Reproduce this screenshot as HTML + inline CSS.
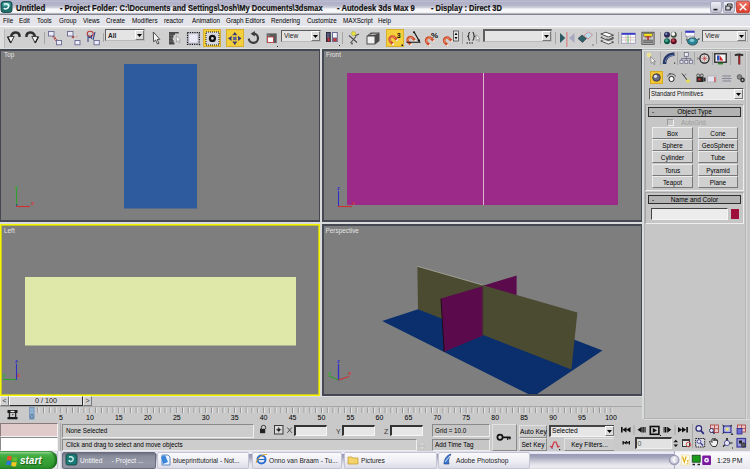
<!DOCTYPE html>
<html><head><meta charset="utf-8">
<style>
*{margin:0;padding:0;box-sizing:border-box}
html,body{width:750px;height:469px;overflow:hidden;background:#c9c9c9;font-family:"Liberation Sans",sans-serif;position:relative}
.a{position:absolute}
.t{position:absolute;white-space:pre;line-height:1;color:#000}
.vp{position:absolute;background:#7e7e7e;border:1px solid #454852}
.lbl{position:absolute;font-size:6.4px;color:#e4e4e4;white-space:pre;line-height:1}
.btn{position:absolute;background:#d0d0d0;border:1px solid;border-color:#ececec #787878 #787878 #ececec;font-size:6.4px;text-align:center;white-space:pre;line-height:9px;color:#000}
.fld{position:absolute;background:#e6e6e6;border:1px solid;border-color:#5a5a5a #f0f0f0 #f0f0f0 #5a5a5a}
.sep{position:absolute;width:2px;border-left:1px solid #9a9a9a;border-right:1px solid #f0f0f0}
.tb{position:absolute;background:linear-gradient(#fafafc,#eeeef4 8px,#dcdce8);border-radius:2px;border:1px solid #c4c4d4}
</style></head><body>

<!-- TITLE BAR -->
<div class="a" style="left:0;top:0;width:750px;height:15px;background:linear-gradient(#a0a0b4 0px,#c8c8e0 1px,#b0b0c8 2px,#b4b4c8 5px,#d0d0dc 7.5px,#f4f4f8 9px,#fafafc 11px,#eeeef2 13px,#7c7c8c 14px,#8a8a98 15px)"></div>
<div id="title">
<svg class="a" style="left:0;top:0" width="14" height="14">
 <rect x="1" y="1.5" width="11" height="11" rx="2.5" fill="#1f6e6c" stroke="#0d3a3a" stroke-width="0.8"/>
 <rect x="2.5" y="2.5" width="8" height="4" rx="1.5" fill="#4aa8a2"/>
 <path d="M4 4.5 C6.5 3 9.5 4.5 8.5 7 C7.8 9 5 9.5 3.8 8" fill="none" stroke="#e8f8f6" stroke-width="1.5"/>
</svg>
<div class="t" style="left:16px;top:4.2px;font-size:8.6px;font-weight:bold;color:#101010;-webkit-text-stroke:0.2px #101010;transform:scaleX(0.916);transform-origin:0 0">Untitled</div>
<div class="t" style="left:60px;top:4.2px;font-size:8.6px;font-weight:bold;color:#101010;-webkit-text-stroke:0.2px #101010;transform:scaleX(0.873);transform-origin:0 0">- Project Folder: C:\Documents and Settings\Josh\My Documents\3dsmax</div>
<div class="t" style="left:337px;top:4.2px;font-size:8.6px;font-weight:bold;color:#101010;-webkit-text-stroke:0.2px #101010;transform:scaleX(0.889);transform-origin:0 0">- Autodesk 3ds Max 9</div>
<div class="t" style="left:431px;top:4.2px;font-size:8.6px;font-weight:bold;color:#101010;-webkit-text-stroke:0.2px #101010;transform:scaleX(0.874);transform-origin:0 0">- Display : Direct 3D</div>
</div>

<!-- MENU BAR -->
<div class="a" style="left:0;top:15px;width:750px;height:12px;background:#e4e4eb"></div>
<div class="a" style="left:0;top:26px;width:750px;height:1px;background:#fafafa"></div>
<div id="menu" style="font-size:6.3px">
<div class="t" style="left:3px;top:18px;font-size:6.3px">File</div>
<div class="t" style="left:19px;top:18px;font-size:6.3px">Edit</div>
<div class="t" style="left:37px;top:18px;font-size:6.3px">Tools</div>
<div class="t" style="left:59px;top:18px;font-size:6.3px">Group</div>
<div class="t" style="left:83px;top:18px;font-size:6.3px">Views</div>
<div class="t" style="left:106px;top:18px;font-size:6.3px">Create</div>
<div class="t" style="left:132px;top:18px;font-size:6.3px">Modifiers</div>
<div class="t" style="left:164px;top:18px;font-size:6.3px">reactor</div>
<div class="t" style="left:192px;top:18px;font-size:6.3px">Animation</div>
<div class="t" style="left:226px;top:18px;font-size:6.3px">Graph Editors</div>
<div class="t" style="left:271px;top:18px;font-size:6.3px">Rendering</div>
<div class="t" style="left:307px;top:18px;font-size:6.3px">Customize</div>
<div class="t" style="left:343px;top:18px;font-size:6.3px">MAXScript</div>
<div class="t" style="left:378px;top:18px;font-size:6.3px">Help</div>
</div>

<!-- TOOLBAR -->
<div class="a" style="left:0;top:27px;width:750px;height:22px;background:#d0d0d0"></div>
<div class="a" style="left:0;top:27px;width:750px;height:2px;background:#dedede"></div>
<div class="a" style="left:0;top:27px;width:4px;height:22px;background:#dedede"></div>
<div class="a" style="left:4px;top:29px;width:1px;height:19px;background:#b8b8b8"></div>
<div class="a" style="left:0;top:48px;width:750px;height:1px;background:#dce2e0"></div>


<!-- TOOLBAR ICONS -->
<div class="a" style="left:203px;top:29px;width:18px;height:18px;background:#f4cf3c;border:1px solid #d8b030"></div>
<div class="a" style="left:226px;top:29px;width:18px;height:18px;background:#f4cf3c;border:1px solid #d8b030"></div>
<div class="a" style="left:386px;top:29px;width:18px;height:18px;background:#f4cf3c;border:1px solid #d8b030"></div>
<svg class="a" style="left:0;top:27px" width="750" height="22" viewBox="0 27 750 22">
 <g fill="#a4a4a4">
  <rect x="44" y="32" width="1" height="12"/><rect x="103" y="33" width="1" height="9"/><rect x="342" y="32" width="1" height="12"/>
  <rect x="462" y="32" width="1" height="12"/><rect x="555" y="32" width="1" height="12"/><rect x="596" y="32" width="1" height="12"/>
  <rect x="618" y="32" width="1" height="12"/><rect x="660" y="32" width="1" height="12"/><rect x="681" y="32" width="1" height="12"/>
 </g>
 <!-- undo -->
 <path d="M19.6 37 C19.8 31.2 12.5 30.8 11 36.5" fill="none" stroke="#2e2e2e" stroke-width="2.4"/>
 <path d="M7.6 36.8 L14.2 36.4 L10.8 43Z" fill="#f8f8f8" stroke="#3a3a3a" stroke-width="1" stroke-linejoin="round"/>
 <path d="M7.6 36.8 L10.8 43" stroke="#222" stroke-width="1.4"/>
 <!-- redo -->
 <path d="M26.4 37 C26.2 31.2 33.5 30.8 35 36.5" fill="none" stroke="#2e2e2e" stroke-width="2.4"/>
 <path d="M31.8 36.4 L38.4 36.8 L35.2 43Z" fill="#f8f8f8" stroke="#3a3a3a" stroke-width="1" stroke-linejoin="round"/>
 <path d="M38.4 36.8 L35.2 43" stroke="#222" stroke-width="1.4"/>
 <!-- link -->
 <path d="M53 36 L57 41" stroke="#b04040" stroke-width="2.2" stroke-dasharray="1.5 0.8"/>
 <rect x="48.5" y="31.5" width="5.5" height="4.5" fill="#ececf8" stroke="#6a6a92" stroke-width="0.9"/>
 <rect x="56.5" y="40.5" width="5" height="4.3" fill="#ececf8" stroke="#6a6a92" stroke-width="0.9"/>
 <!-- unlink -->
 <path d="M72 36.5 L74 37.5" stroke="#b04040" stroke-width="2"/>
 <path d="M76 37 L78 36" stroke="#d8b0b0" stroke-width="1.5"/>
 <rect x="67.5" y="31.5" width="5.5" height="4.5" fill="#ececf8" stroke="#6a6a92" stroke-width="0.9"/>
 <rect x="75" y="40.5" width="5" height="4.3" fill="#ececf8" stroke="#6a6a92" stroke-width="0.9"/>
 <!-- bind -->
 <ellipse cx="90.2" cy="33.8" rx="3" ry="2.6" fill="none" stroke="#c03838" stroke-width="1.1"/>
 <path d="M88 35 V42 M91.5 35 V39 M88 37.5 H92 M95 32 L93 40" stroke="#3a4a90" stroke-width="1.1" fill="none"/>
 <rect x="94" y="40.5" width="5.3" height="4.3" fill="#ececf8" stroke="#6a6a92" stroke-width="0.9"/>
 <!-- select -->
 <path d="M153.3 32 L153.6 41.8 L155.6 40 L157.5 44 L159 43.3 L157.2 39.5 L159.8 39.3Z" fill="#f8f8f8" stroke="#3c3c3c" stroke-width="0.9" stroke-linejoin="round"/>
 <!-- select by name -->
 <path d="M169 32 H178.7 V33.6 H175 V35 H173.5 V37.5 H172.8 V40 H173.5 V42.5 H174.5 V44.5 H169Z" fill="#4a4a4a"/>
 <path d="M169 35.2 H174 M169 38 H173 M169 41 H173.5" stroke="#888" stroke-width="0.5"/>
 <path d="M176.3 35.5 L176.5 42 L177.8 40.8 L179 43.2 L180 42.7 L178.9 40.4 L180.5 40.2Z" fill="#fafafa" stroke="#777" stroke-width="0.5"/>
 <!-- rect region -->
 <rect x="187.5" y="32.5" width="11.8" height="11.8" fill="#b8b8c8" stroke="#151515" stroke-width="1.2" stroke-dasharray="1.2 1.1"/>
 <rect x="189.2" y="34.2" width="8.4" height="8.4" fill="#eaeaf8"/>
 <rect x="199" y="44" width="1.2" height="1.2" fill="#222"/>
 <!-- window/crossing -->
 <rect x="206" y="32" width="13" height="13" fill="#d8d8e0" stroke="#151515" stroke-width="1" stroke-dasharray="1 1"/>
 <circle cx="212.4" cy="38.4" r="3.6" fill="#111"/>
 <circle cx="212.4" cy="38.4" r="1.3" fill="#dcdcdc"/>
 <!-- move -->
 <path d="M234.8 38.4 V32.8 M234.8 38.4 V44.6 M234.8 38.4 H228.6 M234.8 38.4 H241" stroke="#3a3a6a" stroke-width="1.3"/>
 <path d="M232.2 35.2 L234.8 32.2 L237.4 35.2Z M232.2 41.6 L234.8 44.8 L237.4 41.6Z M231.6 35.8 L228.2 38.4 L231.6 41Z M238 35.8 L241.4 38.4 L238 41Z" fill="#3a3a78"/>
 <path d="M234.8 35.4 L237.8 38.4 L234.8 41.4 L231.8 38.4Z" fill="#5a5a90"/>
 <circle cx="234.8" cy="36" r="0.9" fill="#f0e040"/><circle cx="234.8" cy="40.8" r="0.9" fill="#f0e040"/>
 <circle cx="232.4" cy="38.4" r="0.9" fill="#f0e040"/><circle cx="237.2" cy="38.4" r="0.9" fill="#f0e040"/>
 <!-- rotate -->
 <path d="M253.6 33.6 A4.6 4.6 0 1 1 248.8 38.6" fill="none" stroke="#3c3c3c" stroke-width="2.2"/>
 <path d="M250.6 33.8 L254.8 31 L254.8 36.4Z" fill="#3c3c3c"/>
 <!-- scale -->
 <rect x="266.7" y="33.4" width="10" height="9.6" fill="#5a5a5a"/>
 <rect x="267.5" y="34.2" width="2" height="8" fill="#7a7a7a"/>
 <rect x="267.5" y="37" width="6" height="5.5" fill="#fafafa" stroke="#c03838" stroke-width="0.8"/>
 <rect x="277" y="46" width="1" height="1" fill="#333"/>
 <!-- pivot -->
 <rect x="326" y="32" width="4.8" height="10" fill="#2a2a44"/>
 <rect x="327" y="33" width="2.5" height="5" fill="#5a5a78"/>
 <rect x="327.5" y="38" width="2" height="3.5" fill="#d03030"/>
 <rect x="332" y="32" width="5.8" height="10" fill="#6a6a90"/>
 <rect x="333" y="33" width="3.8" height="4.5" fill="#f4f4fa"/>
 <rect x="333.5" y="38.5" width="3" height="2.6" fill="#d03030"/>
 <rect x="339" y="45" width="1" height="1" fill="#333"/>
 <!-- manipulate -->
 <path d="M349 35.5 L357 42.5 M350.5 43 L356 36.5 M355 36 L359 34" fill="none" stroke="#4a4a4a" stroke-width="1.1"/>
 <circle cx="353.6" cy="33.6" r="2.1" fill="#e8e040" stroke="#a0a030" stroke-width="0.5"/>
 <circle cx="352" cy="43.5" r="1" fill="#555"/>
 <!-- keyboard -->
 <path d="M366.5 36 L371 32.5 H379.5 V41 L375 44.5 H366.5Z" fill="#4a4a4a"/>
 <path d="M367.5 36.5 H374.5 V43.5 H367.5Z" fill="#f0f0f0"/>
 <path d="M369 35 L372 33.5 H378 L375 35Z" fill="#f4f4f4"/>
 <path d="M370 34 H377" stroke="#222" stroke-width="0.7"/>
 <!-- snaps: magnet -->
 <g transform="translate(392.5 39.5) rotate(-45)">
  <path d="M-2.9 4.2 V0 A2.9 2.9 0 0 1 2.9 0 V4.2" fill="none" stroke="#cf4e2a" stroke-width="2.6"/>
  <path d="M-2.9 0.5 A2.9 2.9 0 0 1 2.9 0.5" fill="none" stroke="#f0a080" stroke-width="0.8"/>
  <path d="M-2.9 3 V4.6 M2.9 3 V4.6" stroke="#f4ece4" stroke-width="2.6"/>
 </g>
 <g transform="translate(410.5 40) rotate(-45)">
  <path d="M-2.9 4.2 V0 A2.9 2.9 0 0 1 2.9 0 V4.2" fill="none" stroke="#cf4e2a" stroke-width="2.6"/>
  <path d="M-2.9 0.5 A2.9 2.9 0 0 1 2.9 0.5" fill="none" stroke="#f0a080" stroke-width="0.8"/>
  <path d="M-2.9 3 V4.6 M2.9 3 V4.6" stroke="#f4ece4" stroke-width="2.6"/>
 </g>
 <g transform="translate(429 40.5) rotate(-45)">
  <path d="M-2.9 4.2 V0 A2.9 2.9 0 0 1 2.9 0 V4.2" fill="none" stroke="#cf4e2a" stroke-width="2.6"/>
  <path d="M-2.9 0.5 A2.9 2.9 0 0 1 2.9 0.5" fill="none" stroke="#f0a080" stroke-width="0.8"/>
  <path d="M-2.9 3 V4.6 M2.9 3 V4.6" stroke="#f4ece4" stroke-width="2.6"/>
 </g>
 <g transform="translate(447 40.5) rotate(-45)">
  <path d="M-2.9 4.2 V0 A2.9 2.9 0 0 1 2.9 0 V4.2" fill="none" stroke="#cf4e2a" stroke-width="2.6"/>
  <path d="M-2.9 0.5 A2.9 2.9 0 0 1 2.9 0.5" fill="none" stroke="#f0a080" stroke-width="0.8"/>
  <path d="M-2.9 3 V4.6 M2.9 3 V4.6" stroke="#f4ece4" stroke-width="2.6"/>
 </g>
 <text x="396.8" y="37.9" font-size="7" font-weight="bold" font-family="Liberation Sans" fill="#111">3</text>
 <rect x="401.5" y="44.5" width="1.5" height="1.5" fill="#111"/>
 <path d="M414 31.8 L419.5 41.5 M406.5 42.2 H420.5" fill="none" stroke="#111" stroke-width="1.1"/>
 <circle cx="414" cy="32.2" r="1" fill="#111"/><circle cx="418.8" cy="40.4" r="1.1" fill="#111"/>
 <text x="431" y="38" font-size="8" font-weight="bold" font-family="Liberation Sans" fill="#111">%</text>
 <rect x="453.5" y="31" width="5" height="10" fill="#e8e8e8" stroke="#333" stroke-width="0.7"/>
 <path d="M454.5 35 L456 32.5 L457.5 35Z M454.5 37 L456 39.5 L457.5 37Z" fill="#111"/>
 <!-- named sel sets -->
 <path d="M470 32.3 C468.3 32.3 468.8 35.5 468.5 36 C468.2 36.5 467.2 36.3 467.2 36.3 C467.2 36.3 468.2 36.2 468.5 36.8 C468.8 37.3 468.3 40.3 470 40.3" fill="none" stroke="#333" stroke-width="1.1"/>
 <path d="M472.5 32.3 C474.2 32.3 473.7 35.5 474 36 C474.3 36.5 475.3 36.3 475.3 36.3 C475.3 36.3 474.3 36.2 474 36.8 C473.7 37.3 474.2 40.3 472.5 40.3" fill="none" stroke="#333" stroke-width="1.1"/>
 <path d="M476 34.5 L476.3 40.5 L477.5 39.4 L478.6 41.6 L479.5 41.2 L478.5 39 L480 38.9Z" fill="#fafafa" stroke="#666" stroke-width="0.5"/>
 <path d="M466.5 43 H468 M469 43 H470.5 M471.5 43 H473" stroke="#555" stroke-width="1.3"/>
 <!-- mirror -->
 <path d="M560 33 L565.2 38 L560 43Z" fill="#2a5a60"/>
 <rect x="566.2" y="32" width="1.3" height="15" fill="#d88888"/>
 <path d="M574.5 33 L569 38 L574.5 43Z" fill="#a8a8c0"/>
 <!-- align -->
 <path d="M578 38.5 L582 35 L586.5 38.5 L582.5 42.5Z" fill="#2f6068" stroke="#223" stroke-width="0.5"/>
 <path d="M584 35.5 L588.5 32 L592.5 35 L588 39Z" fill="#b8dcec" stroke="#d08080" stroke-width="0.8"/>
 <rect x="592.5" y="44.5" width="1" height="1" fill="#222"/>
 <!-- layers -->
 <path d="M600.8 34 L606 32.2 L613.5 35.2 L608.3 37Z" fill="#fafafa" stroke="#2a2a2a" stroke-width="0.8"/>
 <path d="M600.8 37.5 L602.5 36.9 M606.5 38.8 L608.3 39.5 L613.5 37.7 L611.8 37" fill="none" stroke="#2a2a2a" stroke-width="0.8"/>
 <path d="M600.8 37.5 L608.3 40.5 L613.5 38.7" fill="none" stroke="#2a2a2a" stroke-width="0.8"/>
 <path d="M600.8 41 L608.3 44 L613.5 42.2 M600.8 41 L602.5 40.4 M613.5 42.2 L611.8 41.5" fill="#fafafa" stroke="#2a2a2a" stroke-width="0.8"/>
 <!-- curve editor -->
 <rect x="621.6" y="33" width="13.8" height="10.2" fill="#f8f8f8" stroke="#8080a8" stroke-width="0.6"/>
 <rect x="621.6" y="33" width="13.8" height="1.8" fill="#3a3ad0"/>
 <path d="M622 37.5 H635 M622 40 H635 M626 35 V43 M630.5 35 V43" stroke="#c8a8a8" stroke-width="0.6"/>
 <path d="M628 35 V43" stroke="#40b040" stroke-width="0.8"/>
 <!-- schematic -->
 <rect x="641.4" y="31.8" width="13.2" height="13" fill="#555"/>
 <rect x="642.4" y="32.8" width="11.2" height="11" fill="#c4c4c4"/>
 <rect x="643.8" y="33.4" width="8.6" height="2.8" fill="#f4e41c" stroke="#333" stroke-width="0.5"/>
 <rect x="647.3" y="36.2" width="1.5" height="3.8" fill="#c02828"/>
 <rect x="645.2" y="36.6" width="5.6" height="0.9" fill="#c02828"/>
 <rect x="643.8" y="40" width="8.6" height="2.8" fill="#8a8a8a" stroke="#444" stroke-width="0.5"/>
 <!-- material editor -->
 <circle cx="667" cy="34.7" r="3" fill="#2a2a58"/><circle cx="666.3" cy="33.8" r="1.2" fill="#7a88b8"/>
 <circle cx="673.7" cy="34.7" r="3" fill="#3a4a3a"/><circle cx="673.2" cy="34" r="2" fill="#f4f4f4"/>
 <circle cx="667" cy="41.3" r="3" fill="#105a4a"/><circle cx="666.5" cy="40.5" r="1.5" fill="#40a890"/>
 <circle cx="673.7" cy="41.3" r="3" fill="#5a1020"/><circle cx="673.2" cy="40.5" r="1.5" fill="#c04050"/>
 <!-- render -->
 <rect x="685.5" y="31" width="9" height="5" fill="#f8f8ff" stroke="#8a8aa8" stroke-width="0.5"/>
 <rect x="685.3" y="30.8" width="9.2" height="2" fill="#3a3ac8"/>
 <path d="M686 36 L688 40 M694 36 L695 39" stroke="#555" stroke-width="0.6"/>
 <ellipse cx="692.5" cy="41.5" rx="5" ry="3.6" fill="#2a8494" stroke="#1a3a40" stroke-width="0.7"/>
 <ellipse cx="692" cy="40.3" rx="2.5" ry="1.6" fill="#80c8d8"/>
 <path d="M687.5 40.5 L686 39.5 M697.5 40 L699.5 38.5" stroke="#1a4a50" stroke-width="1.1"/>
</svg>
<!-- toolbar dropdowns -->
<div class="a" style="left:105px;top:29px;width:40px;height:12px;background:#e4e4e4;border:1px solid #5e5e5e;border-right-color:#bbb;border-bottom-color:#bbb"></div>
<div class="t" style="left:108px;top:32.5px;font-size:6.5px;font-weight:bold;color:#222">All</div>
<div class="a" style="left:135px;top:30px;width:9px;height:10px;background:#dcdcdc;border:1px solid;border-color:#fff #777 #777 #fff"></div>
<svg class="a" style="left:135px;top:30px" width="9" height="10"><path d="M2 4 h5 l-2.5 3z" fill="#000"/></svg>
<div class="a" style="left:281px;top:30px;width:40px;height:12px;background:#e4e4e4;border:1px solid #5e5e5e;border-right-color:#bbb;border-bottom-color:#bbb"></div>
<div class="t" style="left:284px;top:33px;font-size:6.6px;color:#222">View</div>
<div class="a" style="left:311px;top:31px;width:9px;height:10px;background:#dcdcdc;border:1px solid;border-color:#fff #777 #777 #fff"></div>
<svg class="a" style="left:311px;top:31px" width="9" height="10"><path d="M2 4 h5 l-2.5 3z" fill="#000"/></svg>
<div class="a" style="left:483px;top:29px;width:69px;height:13px;background:#e4e4e4;border:1px solid #5e5e5e;border-left-width:2px;border-top-width:2px;border-right-color:#bbb;border-bottom-color:#bbb"></div>
<div class="a" style="left:542px;top:31px;width:9px;height:10px;background:#dcdcdc;border:1px solid;border-color:#fff #777 #777 #fff"></div>
<svg class="a" style="left:542px;top:31px" width="9" height="10"><path d="M2 4 h5 l-2.5 3z" fill="#000"/></svg>
<div class="a" style="left:702px;top:30px;width:46px;height:12px;background:#e4e4e4;border:1px solid #5e5e5e;border-right-color:#bbb;border-bottom-color:#bbb"></div>
<div class="t" style="left:705px;top:33px;font-size:6.6px;color:#222">View</div>
<div class="a" style="left:737px;top:31px;width:9px;height:10px;background:#dcdcdc;border:1px solid;border-color:#fff #777 #777 #fff"></div>
<svg class="a" style="left:737px;top:31px" width="9" height="10"><path d="M2 4 h5 l-2.5 3z" fill="#000"/></svg>
<!-- window buttons -->
<svg class="a" style="left:708px;top:0" width="42" height="14">
 <defs><linearGradient id="wb" x1="0" y1="0" x2="0" y2="1"><stop offset="0" stop-color="#f0f0f8"/><stop offset="1" stop-color="#c4c4d4"/></linearGradient>
 <linearGradient id="wc" x1="0" y1="0" x2="0" y2="1"><stop offset="0" stop-color="#f07868"/><stop offset="1" stop-color="#d83828"/></linearGradient></defs>
 <rect x="2.5" y="1.5" width="11" height="11" rx="1.5" fill="url(#wb)" stroke="#9a9ab4" stroke-width="0.8"/>
 <rect x="5.5" y="8.8" width="4" height="1.6" fill="#222"/>
 <rect x="15.2" y="1.5" width="11.3" height="11" rx="1.5" fill="url(#wb)" stroke="#9a9ab4" stroke-width="0.8"/>
 <rect x="17.8" y="6" width="4.5" height="4" fill="none" stroke="#222" stroke-width="1"/>
 <path d="M19.5 5.5 V4 H24 V8 H22.8" fill="none" stroke="#222" stroke-width="1"/>
 <rect x="28.5" y="1.2" width="13" height="11.5" rx="1.5" fill="url(#wc)" stroke="#b83020" stroke-width="0.7"/>
 <path d="M31.8 3.8 L38.3 10.2 M38.3 3.8 L31.8 10.2" stroke="#fff" stroke-width="1.5"/>
</svg>

<!-- VIEWPORT AREA -->
<div class="a" style="left:0;top:49px;width:643px;height:347px;background:#dadada"></div>
<div class="vp" style="left:0;top:49px;width:320px;height:173px;border-width:2px 1px 2px 1px"></div>
<div class="vp" style="left:322px;top:49px;width:320px;height:173px;border-width:2px 1px 2px 2px"></div>
<div class="vp" style="left:0;top:224px;width:320px;height:172px;border:1px solid #f4f400;box-shadow:inset 0 0 0 1px #c4c430"></div>
<div class="vp" style="left:322px;top:224px;width:320px;height:172px;border-width:2px 1px 2px 2px"></div>


<!-- VIEWPORT CONTENT -->
<svg class="a" style="left:0;top:0" width="750" height="469" viewBox="0 0 750 469">
 <defs><clipPath id="cp"><rect x="322" y="224" width="319" height="170"/></clipPath></defs>
 <!-- top -->
 <rect x="124" y="64" width="73" height="144.5" fill="#2d5b9e"/>
 <!-- front -->
 <rect x="347" y="73" width="271" height="132" fill="#9c2a88"/>
 <rect x="483" y="73" width="1" height="132" fill="#dcb8d0"/>
 <!-- left -->
 <rect x="25" y="277" width="271" height="68.5" fill="#dfe8a9"/>
 <!-- perspective -->
 <g clip-path="url(#cp)">
  <polygon points="382.2,321 460,295.4 602.4,350.4 533.4,396.6" fill="#0b2f6c"/>
  <polygon points="441,298.6 516.6,275.6 516.6,300 444.2,351.8" fill="#5b0a4c"/>
  <polygon points="417.4,266.6 577.4,312.4 571.4,369.6 418,309.2" fill="#4a4b31"/>
  <polygon points="441,298.6 482.6,286.2 482.6,335.8 444.2,351.8" fill="#5b0a4c"/>
  <line x1="483" y1="286.5" x2="483" y2="335.8" stroke="#3a3a2a" stroke-width="0.6"/>
  <line x1="417.4" y1="266.3" x2="482.6" y2="285" stroke="#b0b0a0" stroke-width="0.7"/>
  <line x1="441" y1="298.6" x2="444.2" y2="351.8" stroke="#1a0a14" stroke-width="0.9"/>
 </g>
 <!-- tripods -->
 <g stroke-width="1.1">
  <line x1="16.5" y1="189" x2="16.5" y2="207" stroke="#2ea02e"/>
  <line x1="16" y1="206.5" x2="30" y2="206.5" stroke="#d03030"/>
  <line x1="338.5" y1="191" x2="338.5" y2="207" stroke="#3030c8"/>
  <line x1="338" y1="206.5" x2="352" y2="206.5" stroke="#d03030"/>
  <line x1="3" y1="379.5" x2="16" y2="379.5" stroke="#2ea02e"/>
  <line x1="16.5" y1="364" x2="16.5" y2="380" stroke="#3030c8"/>
  <line x1="338.5" y1="364" x2="338.5" y2="380.5" stroke="#3030c8" stroke-width="1.3"/>
  <line x1="338.5" y1="380" x2="329" y2="376" stroke="#2ea02e"/>
  <line x1="338.5" y1="380" x2="349" y2="376.5" stroke="#d03030"/>
 </g>
 <g font-family="Liberation Sans" font-size="5.5" font-weight="bold">
  <text x="15" y="189" fill="#30b030">y</text><text x="31" y="205" fill="#d83838">x</text><text x="15.5" y="206" fill="#3030c8" font-size="4">z</text>
  <text x="337" y="190" fill="#3030d0">z</text><text x="352" y="205" fill="#d83838">x</text>
  <text x="15" y="363" fill="#3030d0">z</text><text x="17" y="377" fill="#d83838">x</text><text x="2.5" y="377" fill="#30b030">y</text>
  <text x="337" y="363" fill="#3030d0">z</text><text x="328" y="375" fill="#30b030">y</text><text x="348" y="375" fill="#d83838">x</text>
 </g>
</svg>
<div class="lbl" style="left:4px;top:51.5px">Top</div>
<div class="lbl" style="left:326px;top:51.5px">Front</div>
<div class="lbl" style="left:4px;top:227.5px">Left</div>
<div class="lbl" style="left:325.5px;top:227.8px">Perspective</div>


<!-- BOTTOM: TIME SLIDER -->
<div class="a" style="left:0;top:396px;width:643px;height:11px;background:#cacaca"></div>
<div class="a" style="left:0;top:396px;width:643px;height:1px;background:#dcdcdc"></div>
<div class="a" style="left:0;top:406px;width:643px;height:1px;background:#a8a8a8"></div>
<div class="btn" style="left:0;top:396px;width:9px;height:10px;font-size:7px;line-height:8px;color:#333">&lt;</div>
<div class="a" style="left:9px;top:396px;width:74px;height:10px;background:#d6d6d6;border:1px solid;border-color:#f8f8f8 #2a2a2a #2a2a2a #f8f8f8"></div>
<div class="t" style="left:9px;width:74px;text-align:center;top:397.3px;font-size:7.2px;color:#1a1a1a">0 / 100</div>
<div class="btn" style="left:83px;top:396px;width:9px;height:10px;font-size:7px;line-height:8px;color:#333">&gt;</div>
<!-- TRACK BAR -->
<div class="a" style="left:0;top:407px;width:643px;height:16px;background:#c9c9c9"></div>
<svg class="a" style="left:0;top:0" width="643" height="469">
<rect x="37.29" y="407.5" width="1" height="5.5" fill="#8e8e8e"/><rect x="38.29" y="407.5" width="1" height="5.5" fill="#e6e6e6"/><rect x="43.08" y="407.5" width="1" height="5.5" fill="#8e8e8e"/><rect x="44.08" y="407.5" width="1" height="5.5" fill="#e6e6e6"/><rect x="48.87" y="407.5" width="1" height="5.5" fill="#8e8e8e"/><rect x="49.87" y="407.5" width="1" height="5.5" fill="#e6e6e6"/><rect x="54.66" y="407.5" width="1" height="5.5" fill="#8e8e8e"/><rect x="55.66" y="407.5" width="1" height="5.5" fill="#e6e6e6"/><rect x="60.45" y="407.5" width="1" height="5.5" fill="#8e8e8e"/><rect x="61.45" y="407.5" width="1" height="5.5" fill="#e6e6e6"/><rect x="66.24" y="407.5" width="1" height="5.5" fill="#8e8e8e"/><rect x="67.24" y="407.5" width="1" height="5.5" fill="#e6e6e6"/><rect x="72.03" y="407.5" width="1" height="5.5" fill="#8e8e8e"/><rect x="73.03" y="407.5" width="1" height="5.5" fill="#e6e6e6"/><rect x="77.82" y="407.5" width="1" height="5.5" fill="#8e8e8e"/><rect x="78.82" y="407.5" width="1" height="5.5" fill="#e6e6e6"/><rect x="83.61" y="407.5" width="1" height="5.5" fill="#8e8e8e"/><rect x="84.61" y="407.5" width="1" height="5.5" fill="#e6e6e6"/><rect x="89.40" y="407.5" width="1" height="5.5" fill="#8e8e8e"/><rect x="90.40" y="407.5" width="1" height="5.5" fill="#e6e6e6"/><rect x="95.19" y="407.5" width="1" height="5.5" fill="#8e8e8e"/><rect x="96.19" y="407.5" width="1" height="5.5" fill="#e6e6e6"/><rect x="100.98" y="407.5" width="1" height="5.5" fill="#8e8e8e"/><rect x="101.98" y="407.5" width="1" height="5.5" fill="#e6e6e6"/><rect x="106.77" y="407.5" width="1" height="5.5" fill="#8e8e8e"/><rect x="107.77" y="407.5" width="1" height="5.5" fill="#e6e6e6"/><rect x="112.56" y="407.5" width="1" height="5.5" fill="#8e8e8e"/><rect x="113.56" y="407.5" width="1" height="5.5" fill="#e6e6e6"/><rect x="118.35" y="407.5" width="1" height="5.5" fill="#8e8e8e"/><rect x="119.35" y="407.5" width="1" height="5.5" fill="#e6e6e6"/><rect x="124.14" y="407.5" width="1" height="5.5" fill="#8e8e8e"/><rect x="125.14" y="407.5" width="1" height="5.5" fill="#e6e6e6"/><rect x="129.93" y="407.5" width="1" height="5.5" fill="#8e8e8e"/><rect x="130.93" y="407.5" width="1" height="5.5" fill="#e6e6e6"/><rect x="135.72" y="407.5" width="1" height="5.5" fill="#8e8e8e"/><rect x="136.72" y="407.5" width="1" height="5.5" fill="#e6e6e6"/><rect x="141.51" y="407.5" width="1" height="5.5" fill="#8e8e8e"/><rect x="142.51" y="407.5" width="1" height="5.5" fill="#e6e6e6"/><rect x="147.30" y="407.5" width="1" height="5.5" fill="#8e8e8e"/><rect x="148.30" y="407.5" width="1" height="5.5" fill="#e6e6e6"/><rect x="153.09" y="407.5" width="1" height="5.5" fill="#8e8e8e"/><rect x="154.09" y="407.5" width="1" height="5.5" fill="#e6e6e6"/><rect x="158.88" y="407.5" width="1" height="5.5" fill="#8e8e8e"/><rect x="159.88" y="407.5" width="1" height="5.5" fill="#e6e6e6"/><rect x="164.67" y="407.5" width="1" height="5.5" fill="#8e8e8e"/><rect x="165.67" y="407.5" width="1" height="5.5" fill="#e6e6e6"/><rect x="170.46" y="407.5" width="1" height="5.5" fill="#8e8e8e"/><rect x="171.46" y="407.5" width="1" height="5.5" fill="#e6e6e6"/><rect x="176.25" y="407.5" width="1" height="5.5" fill="#8e8e8e"/><rect x="177.25" y="407.5" width="1" height="5.5" fill="#e6e6e6"/><rect x="182.04" y="407.5" width="1" height="5.5" fill="#8e8e8e"/><rect x="183.04" y="407.5" width="1" height="5.5" fill="#e6e6e6"/><rect x="187.83" y="407.5" width="1" height="5.5" fill="#8e8e8e"/><rect x="188.83" y="407.5" width="1" height="5.5" fill="#e6e6e6"/><rect x="193.62" y="407.5" width="1" height="5.5" fill="#8e8e8e"/><rect x="194.62" y="407.5" width="1" height="5.5" fill="#e6e6e6"/><rect x="199.41" y="407.5" width="1" height="5.5" fill="#8e8e8e"/><rect x="200.41" y="407.5" width="1" height="5.5" fill="#e6e6e6"/><rect x="205.20" y="407.5" width="1" height="5.5" fill="#8e8e8e"/><rect x="206.20" y="407.5" width="1" height="5.5" fill="#e6e6e6"/><rect x="210.99" y="407.5" width="1" height="5.5" fill="#8e8e8e"/><rect x="211.99" y="407.5" width="1" height="5.5" fill="#e6e6e6"/><rect x="216.78" y="407.5" width="1" height="5.5" fill="#8e8e8e"/><rect x="217.78" y="407.5" width="1" height="5.5" fill="#e6e6e6"/><rect x="222.57" y="407.5" width="1" height="5.5" fill="#8e8e8e"/><rect x="223.57" y="407.5" width="1" height="5.5" fill="#e6e6e6"/><rect x="228.36" y="407.5" width="1" height="5.5" fill="#8e8e8e"/><rect x="229.36" y="407.5" width="1" height="5.5" fill="#e6e6e6"/><rect x="234.15" y="407.5" width="1" height="5.5" fill="#8e8e8e"/><rect x="235.15" y="407.5" width="1" height="5.5" fill="#e6e6e6"/><rect x="239.94" y="407.5" width="1" height="5.5" fill="#8e8e8e"/><rect x="240.94" y="407.5" width="1" height="5.5" fill="#e6e6e6"/><rect x="245.73" y="407.5" width="1" height="5.5" fill="#8e8e8e"/><rect x="246.73" y="407.5" width="1" height="5.5" fill="#e6e6e6"/><rect x="251.52" y="407.5" width="1" height="5.5" fill="#8e8e8e"/><rect x="252.52" y="407.5" width="1" height="5.5" fill="#e6e6e6"/><rect x="257.31" y="407.5" width="1" height="5.5" fill="#8e8e8e"/><rect x="258.31" y="407.5" width="1" height="5.5" fill="#e6e6e6"/><rect x="263.10" y="407.5" width="1" height="5.5" fill="#8e8e8e"/><rect x="264.10" y="407.5" width="1" height="5.5" fill="#e6e6e6"/><rect x="268.89" y="407.5" width="1" height="5.5" fill="#8e8e8e"/><rect x="269.89" y="407.5" width="1" height="5.5" fill="#e6e6e6"/><rect x="274.68" y="407.5" width="1" height="5.5" fill="#8e8e8e"/><rect x="275.68" y="407.5" width="1" height="5.5" fill="#e6e6e6"/><rect x="280.47" y="407.5" width="1" height="5.5" fill="#8e8e8e"/><rect x="281.47" y="407.5" width="1" height="5.5" fill="#e6e6e6"/><rect x="286.26" y="407.5" width="1" height="5.5" fill="#8e8e8e"/><rect x="287.26" y="407.5" width="1" height="5.5" fill="#e6e6e6"/><rect x="292.05" y="407.5" width="1" height="5.5" fill="#8e8e8e"/><rect x="293.05" y="407.5" width="1" height="5.5" fill="#e6e6e6"/><rect x="297.84" y="407.5" width="1" height="5.5" fill="#8e8e8e"/><rect x="298.84" y="407.5" width="1" height="5.5" fill="#e6e6e6"/><rect x="303.63" y="407.5" width="1" height="5.5" fill="#8e8e8e"/><rect x="304.63" y="407.5" width="1" height="5.5" fill="#e6e6e6"/><rect x="309.42" y="407.5" width="1" height="5.5" fill="#8e8e8e"/><rect x="310.42" y="407.5" width="1" height="5.5" fill="#e6e6e6"/><rect x="315.21" y="407.5" width="1" height="5.5" fill="#8e8e8e"/><rect x="316.21" y="407.5" width="1" height="5.5" fill="#e6e6e6"/><rect x="321.00" y="407.5" width="1" height="5.5" fill="#8e8e8e"/><rect x="322.00" y="407.5" width="1" height="5.5" fill="#e6e6e6"/><rect x="326.79" y="407.5" width="1" height="5.5" fill="#8e8e8e"/><rect x="327.79" y="407.5" width="1" height="5.5" fill="#e6e6e6"/><rect x="332.58" y="407.5" width="1" height="5.5" fill="#8e8e8e"/><rect x="333.58" y="407.5" width="1" height="5.5" fill="#e6e6e6"/><rect x="338.37" y="407.5" width="1" height="5.5" fill="#8e8e8e"/><rect x="339.37" y="407.5" width="1" height="5.5" fill="#e6e6e6"/><rect x="344.16" y="407.5" width="1" height="5.5" fill="#8e8e8e"/><rect x="345.16" y="407.5" width="1" height="5.5" fill="#e6e6e6"/><rect x="349.95" y="407.5" width="1" height="5.5" fill="#8e8e8e"/><rect x="350.95" y="407.5" width="1" height="5.5" fill="#e6e6e6"/><rect x="355.74" y="407.5" width="1" height="5.5" fill="#8e8e8e"/><rect x="356.74" y="407.5" width="1" height="5.5" fill="#e6e6e6"/><rect x="361.53" y="407.5" width="1" height="5.5" fill="#8e8e8e"/><rect x="362.53" y="407.5" width="1" height="5.5" fill="#e6e6e6"/><rect x="367.32" y="407.5" width="1" height="5.5" fill="#8e8e8e"/><rect x="368.32" y="407.5" width="1" height="5.5" fill="#e6e6e6"/><rect x="373.11" y="407.5" width="1" height="5.5" fill="#8e8e8e"/><rect x="374.11" y="407.5" width="1" height="5.5" fill="#e6e6e6"/><rect x="378.90" y="407.5" width="1" height="5.5" fill="#8e8e8e"/><rect x="379.90" y="407.5" width="1" height="5.5" fill="#e6e6e6"/><rect x="384.69" y="407.5" width="1" height="5.5" fill="#8e8e8e"/><rect x="385.69" y="407.5" width="1" height="5.5" fill="#e6e6e6"/><rect x="390.48" y="407.5" width="1" height="5.5" fill="#8e8e8e"/><rect x="391.48" y="407.5" width="1" height="5.5" fill="#e6e6e6"/><rect x="396.27" y="407.5" width="1" height="5.5" fill="#8e8e8e"/><rect x="397.27" y="407.5" width="1" height="5.5" fill="#e6e6e6"/><rect x="402.06" y="407.5" width="1" height="5.5" fill="#8e8e8e"/><rect x="403.06" y="407.5" width="1" height="5.5" fill="#e6e6e6"/><rect x="407.85" y="407.5" width="1" height="5.5" fill="#8e8e8e"/><rect x="408.85" y="407.5" width="1" height="5.5" fill="#e6e6e6"/><rect x="413.64" y="407.5" width="1" height="5.5" fill="#8e8e8e"/><rect x="414.64" y="407.5" width="1" height="5.5" fill="#e6e6e6"/><rect x="419.43" y="407.5" width="1" height="5.5" fill="#8e8e8e"/><rect x="420.43" y="407.5" width="1" height="5.5" fill="#e6e6e6"/><rect x="425.22" y="407.5" width="1" height="5.5" fill="#8e8e8e"/><rect x="426.22" y="407.5" width="1" height="5.5" fill="#e6e6e6"/><rect x="431.01" y="407.5" width="1" height="5.5" fill="#8e8e8e"/><rect x="432.01" y="407.5" width="1" height="5.5" fill="#e6e6e6"/><rect x="436.80" y="407.5" width="1" height="5.5" fill="#8e8e8e"/><rect x="437.80" y="407.5" width="1" height="5.5" fill="#e6e6e6"/><rect x="442.59" y="407.5" width="1" height="5.5" fill="#8e8e8e"/><rect x="443.59" y="407.5" width="1" height="5.5" fill="#e6e6e6"/><rect x="448.38" y="407.5" width="1" height="5.5" fill="#8e8e8e"/><rect x="449.38" y="407.5" width="1" height="5.5" fill="#e6e6e6"/><rect x="454.17" y="407.5" width="1" height="5.5" fill="#8e8e8e"/><rect x="455.17" y="407.5" width="1" height="5.5" fill="#e6e6e6"/><rect x="459.96" y="407.5" width="1" height="5.5" fill="#8e8e8e"/><rect x="460.96" y="407.5" width="1" height="5.5" fill="#e6e6e6"/><rect x="465.75" y="407.5" width="1" height="5.5" fill="#8e8e8e"/><rect x="466.75" y="407.5" width="1" height="5.5" fill="#e6e6e6"/><rect x="471.54" y="407.5" width="1" height="5.5" fill="#8e8e8e"/><rect x="472.54" y="407.5" width="1" height="5.5" fill="#e6e6e6"/><rect x="477.33" y="407.5" width="1" height="5.5" fill="#8e8e8e"/><rect x="478.33" y="407.5" width="1" height="5.5" fill="#e6e6e6"/><rect x="483.12" y="407.5" width="1" height="5.5" fill="#8e8e8e"/><rect x="484.12" y="407.5" width="1" height="5.5" fill="#e6e6e6"/><rect x="488.91" y="407.5" width="1" height="5.5" fill="#8e8e8e"/><rect x="489.91" y="407.5" width="1" height="5.5" fill="#e6e6e6"/><rect x="494.70" y="407.5" width="1" height="5.5" fill="#8e8e8e"/><rect x="495.70" y="407.5" width="1" height="5.5" fill="#e6e6e6"/><rect x="500.49" y="407.5" width="1" height="5.5" fill="#8e8e8e"/><rect x="501.49" y="407.5" width="1" height="5.5" fill="#e6e6e6"/><rect x="506.28" y="407.5" width="1" height="5.5" fill="#8e8e8e"/><rect x="507.28" y="407.5" width="1" height="5.5" fill="#e6e6e6"/><rect x="512.07" y="407.5" width="1" height="5.5" fill="#8e8e8e"/><rect x="513.07" y="407.5" width="1" height="5.5" fill="#e6e6e6"/><rect x="517.86" y="407.5" width="1" height="5.5" fill="#8e8e8e"/><rect x="518.86" y="407.5" width="1" height="5.5" fill="#e6e6e6"/><rect x="523.65" y="407.5" width="1" height="5.5" fill="#8e8e8e"/><rect x="524.65" y="407.5" width="1" height="5.5" fill="#e6e6e6"/><rect x="529.44" y="407.5" width="1" height="5.5" fill="#8e8e8e"/><rect x="530.44" y="407.5" width="1" height="5.5" fill="#e6e6e6"/><rect x="535.23" y="407.5" width="1" height="5.5" fill="#8e8e8e"/><rect x="536.23" y="407.5" width="1" height="5.5" fill="#e6e6e6"/><rect x="541.02" y="407.5" width="1" height="5.5" fill="#8e8e8e"/><rect x="542.02" y="407.5" width="1" height="5.5" fill="#e6e6e6"/><rect x="546.81" y="407.5" width="1" height="5.5" fill="#8e8e8e"/><rect x="547.81" y="407.5" width="1" height="5.5" fill="#e6e6e6"/><rect x="552.60" y="407.5" width="1" height="5.5" fill="#8e8e8e"/><rect x="553.60" y="407.5" width="1" height="5.5" fill="#e6e6e6"/><rect x="558.39" y="407.5" width="1" height="5.5" fill="#8e8e8e"/><rect x="559.39" y="407.5" width="1" height="5.5" fill="#e6e6e6"/><rect x="564.18" y="407.5" width="1" height="5.5" fill="#8e8e8e"/><rect x="565.18" y="407.5" width="1" height="5.5" fill="#e6e6e6"/><rect x="569.97" y="407.5" width="1" height="5.5" fill="#8e8e8e"/><rect x="570.97" y="407.5" width="1" height="5.5" fill="#e6e6e6"/><rect x="575.76" y="407.5" width="1" height="5.5" fill="#8e8e8e"/><rect x="576.76" y="407.5" width="1" height="5.5" fill="#e6e6e6"/><rect x="581.55" y="407.5" width="1" height="5.5" fill="#8e8e8e"/><rect x="582.55" y="407.5" width="1" height="5.5" fill="#e6e6e6"/><rect x="587.34" y="407.5" width="1" height="5.5" fill="#8e8e8e"/><rect x="588.34" y="407.5" width="1" height="5.5" fill="#e6e6e6"/><rect x="593.13" y="407.5" width="1" height="5.5" fill="#8e8e8e"/><rect x="594.13" y="407.5" width="1" height="5.5" fill="#e6e6e6"/><rect x="598.92" y="407.5" width="1" height="5.5" fill="#8e8e8e"/><rect x="599.92" y="407.5" width="1" height="5.5" fill="#e6e6e6"/><rect x="604.71" y="407.5" width="1" height="5.5" fill="#8e8e8e"/><rect x="605.71" y="407.5" width="1" height="5.5" fill="#e6e6e6"/><rect x="610.50" y="407.5" width="1" height="5.5" fill="#8e8e8e"/><rect x="611.50" y="407.5" width="1" height="5.5" fill="#e6e6e6"/>
 <rect x="29" y="407" width="5.6" height="12.5" fill="#7a9cc0"/>
 <rect x="30" y="408" width="3.6" height="11" fill="#8eb0d0"/>
 <!-- key mode icon -->
 <rect x="7.5" y="410" width="10" height="3" fill="#1a1a1a"/>
 <rect x="10.5" y="410.8" width="4" height="1.4" fill="#f0f0f0"/>
 <rect x="8.8" y="413" width="1.3" height="4" fill="#222"/>
 <rect x="15" y="413" width="1.3" height="4" fill="#222"/>
 <rect x="12" y="414" width="1.5" height="1.2" fill="#555"/>
 <rect x="7.5" y="417" width="10" height="2.3" fill="#1a1a1a"/>
</svg>
<div class="t" style="left:41.0px;width:40px;text-align:center;top:414.3px;font-size:7px;color:#000">5</div><div class="t" style="left:69.9px;width:40px;text-align:center;top:414.3px;font-size:7px;color:#000">10</div><div class="t" style="left:98.8px;width:40px;text-align:center;top:414.3px;font-size:7px;color:#000">15</div><div class="t" style="left:127.8px;width:40px;text-align:center;top:414.3px;font-size:7px;color:#000">20</div><div class="t" style="left:156.8px;width:40px;text-align:center;top:414.3px;font-size:7px;color:#000">25</div><div class="t" style="left:185.7px;width:40px;text-align:center;top:414.3px;font-size:7px;color:#000">30</div><div class="t" style="left:214.7px;width:40px;text-align:center;top:414.3px;font-size:7px;color:#000">35</div><div class="t" style="left:243.6px;width:40px;text-align:center;top:414.3px;font-size:7px;color:#000">40</div><div class="t" style="left:272.6px;width:40px;text-align:center;top:414.3px;font-size:7px;color:#000">45</div><div class="t" style="left:301.5px;width:40px;text-align:center;top:414.3px;font-size:7px;color:#000">50</div><div class="t" style="left:330.4px;width:40px;text-align:center;top:414.3px;font-size:7px;color:#000">55</div><div class="t" style="left:359.4px;width:40px;text-align:center;top:414.3px;font-size:7px;color:#000">60</div><div class="t" style="left:388.4px;width:40px;text-align:center;top:414.3px;font-size:7px;color:#000">65</div><div class="t" style="left:417.3px;width:40px;text-align:center;top:414.3px;font-size:7px;color:#000">70</div><div class="t" style="left:446.2px;width:40px;text-align:center;top:414.3px;font-size:7px;color:#000">75</div><div class="t" style="left:475.2px;width:40px;text-align:center;top:414.3px;font-size:7px;color:#000">80</div><div class="t" style="left:504.1px;width:40px;text-align:center;top:414.3px;font-size:7px;color:#000">85</div><div class="t" style="left:533.1px;width:40px;text-align:center;top:414.3px;font-size:7px;color:#000">90</div><div class="t" style="left:562.0px;width:40px;text-align:center;top:414.3px;font-size:7px;color:#000">95</div><div class="t" style="left:591.0px;width:40px;text-align:center;top:414.3px;font-size:7px;color:#000">100</div>
<div class="t" style="left:11.8px;width:40px;text-align:center;top:414px;font-size:6.6px;color:#3a5070">0</div>

<!-- STATUS BAR -->
<div class="a" style="left:0;top:423px;width:618px;height:28px;background:#c9c9c9"></div>
<div class="a" style="left:0px;top:423px;width:58px;height:14px;background:#e0caca;border:1px solid;border-color:#8a7a7a #f2f2f2 #f2f2f2 #8a7a7a"></div>
<div class="a" style="left:60px;top:423px;width:1px;height:28px;background:#a8a8a8"></div>
<div class="a" style="left:0px;top:437px;width:58px;height:14px;background:#ffffff;border:1px solid;border-color:#8a8a8a #f2f2f2 #f2f2f2 #8a8a8a"></div>
<div class="a" style="left:62px;top:424px;width:192px;height:14px;background:#cdcdcd;border:1px solid;border-color:#8a8a8a #eeeeee #eeeeee #8a8a8a"></div>
<div class="t" style="left:66px;top:428px;font-size:6.3px">None Selected</div>
<div class="a" style="left:62px;top:439px;width:355px;height:12px;background:#cdcdcd;border:1px solid;border-color:#8a8a8a #eeeeee #eeeeee #8a8a8a"></div>
<div class="t" style="left:66px;top:441.5px;font-size:6.3px">Click and drag to select and move objects</div>
<!-- lock -->
<svg class="a" style="left:255px;top:422px" width="40" height="14">
 <path d="M6.3 7 V5.5 a2.2 2.2 0 0 1 4.4 0 V7" fill="none" stroke="#3a3a3a" stroke-width="1"/>
 <rect x="5" y="6.8" width="5.2" height="4.4" fill="#222"/>
 <rect x="19.5" y="3.5" width="8.5" height="8.5" fill="#dcdcdc" stroke="#3a3a3a" stroke-width="1"/>
 <circle cx="23.7" cy="7.7" r="1.5" fill="#222"/>
 <path d="M23.7 5 V10.5 M21 7.7 H26.5" stroke="#222" stroke-width="0.6"/>
 <path d="M32.3 5.5 L36.8 10.8 M36.8 5.5 L32.3 10.8" stroke="#444" stroke-width="0.9"/>
</svg>
<div class="fld" style="left:294px;top:425px;width:33px;height:11px;border-width:2px 1px 1px 2px;border-color:#333 #f4f4f4 #f4f4f4 #333"></div>
<div class="t" style="left:336px;top:428px;font-size:7px;color:#333">Y</div>
<div class="fld" style="left:342px;top:425px;width:33px;height:11px;border-width:2px 1px 1px 2px;border-color:#333 #f4f4f4 #f4f4f4 #333"></div>
<div class="t" style="left:384px;top:428px;font-size:7px;color:#333">Z</div>
<div class="fld" style="left:390px;top:425px;width:33px;height:11px;border-width:2px 1px 1px 2px;border-color:#333 #f4f4f4 #f4f4f4 #333"></div>
<svg class="a" style="left:417px;top:440px" width="10" height="11"><path d="M2 5 L5 1.5 L8 5Z M2 6.5 L5 10 L8 6.5Z" fill="#d8d8d8" stroke="#b8b8b8" stroke-width="0.5"/></svg>
<div class="a" style="left:432px;top:424px;width:58px;height:13px;background:#c6c6c6;border:1px solid;border-color:#8a8a8a #eeeeee #eeeeee #8a8a8a"></div>
<div class="t" style="left:435px;top:427.5px;font-size:6.3px">Grid = 10.0</div>
<div class="a" style="left:432px;top:439px;width:58px;height:12px;background:#c6c6c6;border:1px solid;border-color:#8a8a8a #eeeeee #eeeeee #8a8a8a"></div>
<div class="t" style="left:435px;top:441.5px;font-size:6.3px">Add Time Tag</div>
<!-- key button -->
<div class="a" style="left:492px;top:424px;width:25px;height:27px;background:#cbcbcb;border:1px solid;border-color:#e2e2e2 #8a8a8a #8a8a8a #e2e2e2"></div>
<svg class="a" style="left:492px;top:424px" width="25" height="27">
 <circle cx="8" cy="13.3" r="2.6" fill="none" stroke="#111" stroke-width="1.7"/>
 <rect x="10.5" y="12.5" width="8" height="1.7" fill="#111"/>
 <rect x="15" y="13" width="1.4" height="2.8" fill="#111"/>
 <rect x="17.2" y="13" width="1.4" height="2.3" fill="#111"/>
</svg>
<div class="btn" style="left:519px;top:425px;width:28px;height:13px;line-height:12px;background:#cbcbcb;border-color:#e2e2e2 #8a8a8a #8a8a8a #e2e2e2;font-size:6.6px">Auto Key</div>
<div class="btn" style="left:519px;top:438px;width:28px;height:13px;line-height:12px;background:#cbcbcb;border-color:#e2e2e2 #8a8a8a #8a8a8a #e2e2e2;font-size:6.6px">Set Key</div>
<div class="fld" style="left:549px;top:425px;width:66px;height:12px;background:#e6e6e6;border-width:2px 1px 1px 2px;border-color:#444 #f4f4f4 #f4f4f4 #444"></div>
<div class="t" style="left:552px;top:428px;font-size:6.6px">Selected</div>
<div class="a" style="left:605px;top:426px;width:9px;height:10px;background:#dcdcdc;border:1px solid;border-color:#fff #777 #777 #fff"></div>
<svg class="a" style="left:605px;top:426px" width="9" height="10"><path d="M2 4 h5 l-2.5 3z" fill="#000"/></svg>
<svg class="a" style="left:548px;top:439px" width="14" height="12">
 <path d="M2 7 L4 8.5 L6 3 L8 3 L10 8 L11.5 7" fill="none" stroke="#d03040" stroke-width="1.2"/>
 <path d="M3 9 L5 9.5" stroke="#6060b0" stroke-width="0.8"/>
 <rect x="11" y="10" width="1.2" height="1.2" fill="#222"/>
</svg>
<div class="btn" style="left:564px;top:438px;width:51px;height:13px;line-height:12px;background:#cbcbcb;border-color:#e2e2e2 #8a8a8a #8a8a8a #e2e2e2;font-size:6.6px">Key Filters...</div>


<!-- COMMAND PANEL -->
<div class="a" style="left:642px;top:49px;width:108px;height:374px;background:#c6c6c6"></div>
<div class="a" style="left:642px;top:49px;width:108px;height:1px;background:#b0b0b0"></div>
<div class="a" style="left:642px;top:50px;width:108px;height:1px;background:#e2e2e2"></div>
<div class="a" style="left:642px;top:50px;width:2px;height:369px;background:#d8dcdc"></div>
<div class="a" style="left:644px;top:51px;width:1px;height:367px;background:#b2b2b2"></div>
<div class="a" style="left:644px;top:418px;width:102px;height:1px;background:#b2b2b2"></div>
<div class="a" style="left:644px;top:419px;width:106px;height:1px;background:#dadada"></div>
<div class="a" style="left:745px;top:51px;width:1px;height:367px;background:#b8b8b8"></div>
<div class="a" style="left:746px;top:51px;width:1px;height:368px;background:#d6d6d6"></div>
<!-- tabs -->
<svg class="a" style="left:642px;top:49px" width="108" height="60">
 <g fill="#a8a8a8">
  <rect x="18" y="3" width="1" height="13"/><rect x="35" y="3" width="1" height="13"/><rect x="52" y="3" width="1" height="13"/>
  <rect x="70" y="3" width="1" height="13"/><rect x="88" y="3" width="1" height="13"/>
 </g>
 <!-- create: cursor with star -->
 <circle cx="7" cy="6" r="2.2" fill="#f4f0b0" opacity="0.9"/>
 <path d="M7 3.5 V8.5 M4.5 6 H9.5" stroke="#e8d860" stroke-width="0.6"/>
 <path d="M8.5 7.5 L13.5 12.5 L11.6 12.6 L13 15 L12 15.6 L10.7 13.2 L9.3 14.4Z" fill="#f4f4f4" stroke="#666" stroke-width="0.6"/>
 <!-- modify: bent tube -->
 <path d="M22.5 15 C22.5 9 26 5.5 32.5 5" fill="none" stroke="#2a3a68" stroke-width="3.6"/>
 <path d="M23.5 13 C23.8 9 26.5 6.8 31.5 6.2" fill="none" stroke="#7a8ab8" stroke-width="1"/>
 <rect x="32" y="13.5" width="1.2" height="1.2" fill="#333"/>
 <!-- hierarchy -->
 <rect x="42.3" y="3.5" width="4" height="3.8" fill="#f0f0f4" stroke="#6a6a88" stroke-width="0.8"/>
 <path d="M44.3 7.3 V9.5 M39.5 9.5 H49 M39.5 9.5 V11.3 M44.3 9.5 V11.3 M49 9.5 V11.3" stroke="#6a6a88" stroke-width="0.8" fill="none"/>
 <rect x="38" y="11.3" width="3" height="3" fill="#f0f0f4" stroke="#6a6a88" stroke-width="0.8"/>
 <rect x="42.8" y="11.3" width="3" height="3" fill="#f0f0f4" stroke="#6a6a88" stroke-width="0.8"/>
 <rect x="47.5" y="11.3" width="3" height="3" fill="#f0f0f4" stroke="#6a6a88" stroke-width="0.8"/>
 <!-- motion -->
 <path d="M55.5 8 L57 9.5 L55.5 11Z" fill="#666"/>
 <circle cx="62.5" cy="9.5" r="4.6" fill="#d8d8d8" stroke="#1a1a1a" stroke-width="1.2"/>
 <path d="M62.5 6.5 V12.5 M59.5 9.5 H65.5 M60.5 7.5 L64.5 11.5 M64.5 7.5 L60.5 11.5" stroke="#c03030" stroke-width="0.5"/>
 <!-- display -->
 <rect x="72" y="4" width="13" height="10" fill="#3a3a3a"/>
 <rect x="73.5" y="5.5" width="10" height="7" fill="#f4f4f4"/>
 <path d="M75 6.5 h2.5 v5 h-2.5z" fill="#3050c0"/><path d="M77.8 6.5 l3.5 5 h-3.5z" fill="#d02020"/>
 <rect x="76" y="14" width="5" height="1.4" fill="#2a8a2a"/>
 <!-- utilities hammer -->
 <path d="M92.5 5.5 Q97 3.5 101.5 5.5 L101 7 Q97 5.8 93 7Z" fill="#2a2a2a"/>
 <path d="M96.3 6 H98.3 V15.5 H96.3Z" fill="#5a1818"/>
 <path d="M96.8 8 H97.8 V15 H96.8Z" fill="#b03030"/>
</svg>
<!-- sub icons -->
<div class="a" style="left:650px;top:71px;width:13px;height:13px;background:#f2c838;border:1px solid #d8a820"></div>
<svg class="a" style="left:642px;top:69px" width="108" height="18">
 <circle cx="14.5" cy="8.5" r="3.8" fill="#6a6a80" stroke="#2a2a3a" stroke-width="0.8"/>
 <circle cx="13.5" cy="7.3" r="1.6" fill="#dfe0f0"/>
 <!-- shapes -->
 <circle cx="29.5" cy="10" r="2.6" fill="#fff" stroke="#222" stroke-width="1"/>
 <path d="M25.5 7.5 C26 4 33 4 33.5 7.5" fill="none" stroke="#333" stroke-width="0.8"/>
 <circle cx="28" cy="4.8" r="0.8" fill="#444"/>
 <!-- lights -->
 <path d="M40 4.5 L45.5 11.5" stroke="#333" stroke-width="1"/>
 <path d="M42 6.5 L44.5 5" stroke="#666" stroke-width="0.7"/>
 <circle cx="46" cy="12" r="1.8" fill="#e8e040"/>
 <!-- camera -->
 <rect x="54.5" y="8" width="7" height="5" fill="#2a2a2a"/>
 <circle cx="56.2" cy="6.5" r="1.5" fill="none" stroke="#333" stroke-width="0.8"/>
 <circle cx="59.8" cy="6.5" r="1.5" fill="none" stroke="#333" stroke-width="0.8"/>
 <rect x="56" y="9.5" width="2.5" height="2" fill="#c83030"/>
 <path d="M61.5 9 L63.5 8.3 V12.7 L61.5 12Z" fill="#2a2a2a"/>
 <!-- helpers -->
 <rect x="65.5" y="7" width="8.5" height="6" fill="#e4e4ee" stroke="#a0a0b0" stroke-width="0.6"/>
 <rect x="72.3" y="8" width="1.2" height="5" fill="#c83838"/>
 <!-- spacewarps -->
 <path d="M80.5 7 H89 M80 9.5 H89.5 M80.5 12 H89" stroke="#7a7a8a" stroke-width="0.9"/>
 <path d="M83 6 V13 M86.5 6 V13" stroke="#a0a0b0" stroke-width="0.5"/>
 <!-- systems -->
 <circle cx="97.5" cy="8" r="2.4" fill="#888" stroke="#444" stroke-width="0.6"/>
 <circle cx="100.5" cy="11" r="2.4" fill="#333"/>
 <circle cx="100.5" cy="11" r="0.9" fill="#bbb"/>
</svg>
<!-- dropdown -->
<div class="fld" style="left:649px;top:88px;width:95px;height:12px;background:#e8e8e8"></div>
<div class="t" style="left:651px;top:90.5px;font-size:6.7px;transform:scaleX(0.9);transform-origin:0 0;color:#111">Standard Primitives</div>
<div class="a" style="left:734px;top:89px;width:9px;height:10px;background:#dcdcdc;border:1px solid;border-color:#fff #777 #777 #fff"></div>
<svg class="a" style="left:734px;top:89px" width="9" height="10"><path d="M2 4 h5 l-2.5 3z" fill="#000"/></svg>

<!-- Object Type rollout -->
<div class="a" style="left:645px;top:104px;width:99px;height:87px;border:1px solid;border-color:#a4a4a4 #eeeeee #eeeeee #a4a4a4"></div>
<div class="a" style="left:648px;top:107px;width:93px;height:10px;background:#b2b2b2;border:1px solid;border-color:#2e2e2e #2e2e2e #2e2e2e #2e2e2e"></div>
<div class="t" style="left:652px;top:109px;font-size:6.3px">-</div>
<div class="t" style="left:648px;width:93px;text-align:center;top:109px;font-size:6.5px">Object Type</div>
<div class="a" style="left:667px;top:119px;width:7px;height:7px;border:1px solid;border-color:#9a9a9a #eee #eee #9a9a9a"></div>
<div class="t" style="left:681px;top:120px;font-size:6.3px;color:#9a9a9a">AutoGrid</div>
<div class="btn" style="left:652px;top:127px;width:41px;height:12px;line-height:11px">Box</div>
<div class="btn" style="left:698px;top:127px;width:40px;height:12px;line-height:11px">Cone</div>
<div class="btn" style="left:652px;top:139px;width:41px;height:12px;line-height:11px">Sphere</div>
<div class="btn" style="left:698px;top:139px;width:40px;height:12px;line-height:11px">GeoSphere</div>
<div class="btn" style="left:652px;top:151px;width:41px;height:12px;line-height:11px">Cylinder</div>
<div class="btn" style="left:698px;top:151px;width:40px;height:12px;line-height:11px">Tube</div>
<div class="btn" style="left:652px;top:164px;width:41px;height:12px;line-height:11px">Torus</div>
<div class="btn" style="left:698px;top:164px;width:40px;height:12px;line-height:11px">Pyramid</div>
<div class="btn" style="left:652px;top:176px;width:41px;height:12px;line-height:11px">Teapot</div>
<div class="btn" style="left:698px;top:176px;width:40px;height:12px;line-height:11px">Plane</div>

<!-- Name and Color rollout -->
<div class="a" style="left:645px;top:192px;width:99px;height:32px;border:1px solid;border-color:#a4a4a4 #eeeeee #eeeeee #a4a4a4"></div>
<div class="a" style="left:648px;top:195px;width:93px;height:9px;background:#b2b2b2;border:1px solid #2e2e2e"></div>
<div class="t" style="left:652px;top:196.5px;font-size:6.3px">-</div>
<div class="t" style="left:648px;width:93px;text-align:center;top:196.5px;font-size:6.5px">Name and Color</div>
<div class="fld" style="left:651px;top:208px;width:77px;height:12px;background:#ececec;border-color:#444 #f4f4f4 #f4f4f4 #444"></div>
<div class="a" style="left:730px;top:208px;width:10px;height:12px;background:#9e0f3c;border:1px solid #c8c8c8"></div>

<!-- PLAYBACK CONTROLS -->
<div class="a" style="left:614px;top:420px;width:136px;height:31px;background:#c9c9c9"></div>
<svg class="a" style="left:0;top:0" width="750" height="469" viewBox="0 0 750 469">
 <g fill="#0e0e0e">
  <rect x="621" y="427" width="1.6" height="5.5"/><path d="M622.5 429.7 L626.5 427 V432.5Z M626.3 429.7 L630.5 427 V432.5Z"/>
  <path d="M637.5 429.7 L641.5 427 V432.5Z"/><rect x="641.6" y="427" width="1" height="5.5"/><rect x="643.2" y="427" width="1" height="5.5"/><rect x="644.6" y="427" width="1" height="5.5"/>
  <rect x="650.3" y="426.5" width="8.6" height="7.8" fill="none" stroke="#0e0e0e" stroke-width="1.6"/>
  <path d="M652.8 428 L657 430.4 L652.8 432.8Z"/>
  <rect x="660" y="435" width="1" height="1"/>
  <rect x="663.6" y="427" width="1" height="5.5"/><rect x="665" y="427" width="1" height="5.5"/><rect x="666.6" y="427" width="1" height="5.5"/><path d="M667.5 427 L671.3 429.7 L667.5 432.5Z"/>
  <path d="M678 427 L682.2 429.7 L678 432.5Z M682 427 L686.2 429.7 L682 432.5Z"/><rect x="686.3" y="427" width="1.6" height="5.5"/>
  <rect x="622.5" y="441" width="1.3" height="3.5"/><path d="M624 442.7 L626.5 441 V444.5Z M628.5 442.7 L626 441 V444.5Z"/><rect x="628.7" y="441" width="1.3" height="3.5"/><rect x="623" y="442.3" width="6" height="0.9"/>
 </g>
 <g fill="#a6a6a6"><rect x="633.5" y="425" width="1" height="10"/><rect x="674.5" y="425" width="1" height="10"/><rect x="692" y="424" width="1" height="24"/></g>
 <!-- zoom -->
 <circle cx="698.8" cy="428.4" r="2.8" fill="#e4e4f4" stroke="#2a2a70" stroke-width="1.2"/>
 <path d="M700.8 430.5 L703.8 433.8" stroke="#2a2a80" stroke-width="1.8"/>
 <!-- zoom all -->
 <rect x="710.5" y="425" width="8" height="7.5" fill="#e8c8c8" stroke="#b04848" stroke-width="0.9"/>
 <path d="M714.5 425 V432.5 M710.5 428.7 H718.5" stroke="#b04848" stroke-width="0.9"/>
 <circle cx="711.5" cy="430.5" r="2" fill="#e8e8f4" stroke="#2a2a60" stroke-width="0.9"/>
 <path d="M713 432 L714.5 433.8" stroke="#2a2a60" stroke-width="1.2"/>
 <!-- zoom extents -->
 <rect x="723.5" y="426" width="7.5" height="6.5" fill="#b8b8e0" stroke="#3a3aa0" stroke-width="1.2"/>
 <rect x="726" y="428" width="2.5" height="2.5" fill="#e8e870"/>
 <path d="M722.5 425 L724.5 426.5 M732 425 L730 426.5 M722.5 433.5 L724.5 432" stroke="#222" stroke-width="1"/>
 <path d="M730.5 434.8 L732 433 L733.5 434.8Z" fill="#111"/>
 <!-- zoom extents all -->
 <rect x="737.5" y="425" width="8" height="7" fill="#e8c8c8" stroke="#b04848" stroke-width="0.9"/>
 <path d="M741.5 425 V432 M737.5 428.5 H745.5" stroke="#b04848" stroke-width="0.9"/>
 <rect x="737" y="428.5" width="5" height="5.5" fill="#6a6ad0" stroke="#2a2a90" stroke-width="0.8"/>
 <!-- row 2: region zoom -->
 <rect x="695.7" y="438.5" width="9" height="8.5" fill="#d8d8e4" stroke="#222" stroke-width="1" stroke-dasharray="1.5 0.8"/>
 <circle cx="699" cy="441.5" r="1.8" fill="#fff" stroke="#3a3a90" stroke-width="0.9"/>
 <path d="M700.5 443 L703 445.5" stroke="#3a3a90" stroke-width="1.2"/>
 <!-- pan -->
 <path d="M710.5 444 L709.5 441.5 L710.5 441 L712 442.5 V439 L713 438.5 L714 439 V441 L714.5 438.5 L715.5 438.5 L716 441 L716.5 439.5 L717.5 440 L717.5 443.5 L716 446.5 H712.5Z" fill="#f0f0f0" stroke="#111" stroke-width="0.8" stroke-linejoin="round"/>
 <!-- arc rotate -->
 <circle cx="727" cy="443" r="2.6" fill="#e8e8f4" stroke="#3a3a90" stroke-width="0.8"/>
 <path d="M727 438 V440.5 M729.5 443 H732.5 M723 446.5 L725 444.8" stroke="#111" stroke-width="1.1"/>
 <path d="M725.8 439.5 L727 437.8 L728.2 439.5Z" fill="#111"/>
 <rect x="732" y="447.5" width="1" height="1" fill="#111"/>
 <!-- maximize -->
 <rect x="737" y="438.5" width="8.5" height="8.5" fill="#9a9ad8" stroke="#3a3aa0" stroke-width="1.2"/>
 <rect x="739" y="440.5" width="3" height="3" fill="#222"/>
 <circle cx="743.5" cy="445" r="2.2" fill="#555" stroke="#222" stroke-width="0.6"/>
</svg>
<div class="a" style="left:635px;top:437px;width:37px;height:12px;background:#e2e2e2;border:1px solid;border-width:2px 1px 1px 2px;border-color:#3a3a3a #eee #eee #3a3a3a"></div>
<div class="t" style="left:637.5px;top:440px;font-size:7px;color:#505050">0</div>
<svg class="a" style="left:672px;top:438px" width="8" height="11"><path d="M1.5 4.3 L3.8 1.8 L6 4.3Z M1.5 6.5 L3.8 9 L6 6.5Z" fill="#111"/></svg>
<svg class="a" style="left:681px;top:437px" width="12" height="12">
 <rect x="1.5" y="2.5" width="7" height="7" fill="#e8e8e8" stroke="#3a3a3a" stroke-width="1"/>
 <rect x="2" y="2" width="6" height="2" fill="#3a3a3a"/>
 <circle cx="7.5" cy="7.5" r="2.3" fill="none" stroke="#c84848" stroke-width="1"/>
</svg>

<!-- TASKBAR -->
<div class="a" style="left:0;top:451px;width:750px;height:18px;background:linear-gradient(#d4d4de 0px,#ececf8 1px,#e6e6f4 2.5px,#9a9cb6 3.5px,#a2a4bc 6px,#c8c8d6 10px,#e2e2ea 13px,#ececf0 16px,#d8d8e0 18px)"></div>
<div class="a" style="left:0;top:451px;width:57px;height:18px;border-radius:0 8px 8px 0;background:linear-gradient(#4aa84a 0px,#8ad48a 1.5px,#4cb24c 3.5px,#3aa63a 7px,#349e34 12px,#2e942e 16px,#2a862a 18px);box-shadow:inset -2px 0 2px #1a6a1a"></div>
<svg class="a" style="left:5px;top:454px" width="14" height="14">
 <path d="M2.5 2.3 Q4.5 1.3 6.8 2.6 L6.2 6.6 Q4 5.4 1.8 6.3Z" fill="#e8562a"/>
 <path d="M7.6 2.8 Q10 4 12.4 2.8 L11.8 6.9 Q9.5 8 7 6.8Z" fill="#62bc34"/>
 <path d="M1.6 7.2 Q4 6.2 6.1 7.5 L5.5 11.5 Q3.2 10.3 1 11.2Z" fill="#2c74dc"/>
 <path d="M6.9 7.7 Q9.3 8.9 11.7 7.8 L11.1 11.9 Q8.8 13 6.3 11.8Z" fill="#f6c622"/>
</svg>
<div class="t" style="left:20px;top:455px;font-size:10.5px;font-style:italic;font-weight:bold;color:#fff;text-shadow:1px 1px 1px #1a5a1a;transform:scaleX(0.95);transform-origin:0 0">start</div>

<!-- taskbar buttons -->
<div class="a" style="left:57px;top:451px;width:5px;height:18px;background:linear-gradient(90deg,#b8b8c8,#f4f4f8 40%,#c8c8d4)"></div>
<div class="a" style="left:62px;top:452px;width:94px;height:17px;border-radius:2px;background:linear-gradient(#6e7182,#8a8d9c 3px,#9598a6 10px,#8b8e9d 17px);border:1px solid #6a6c7c"></div>
<svg class="a" style="left:65px;top:453px" width="14" height="14">
 <rect x="1" y="1" width="11" height="11" rx="2" fill="#1a7a76" stroke="#0c3e3c" stroke-width="0.8"/>
 <path d="M4 4 C7 3 9 5 8 7 C7 9 4 9 4 7" fill="none" stroke="#cdeeea" stroke-width="1.4"/>
</svg>
<div class="t" style="left:80px;top:458.3px;font-size:6.6px;color:#f4f4f8">Untitled     - Project ...</div>
<div class="tb" style="left:157px;top:452px;width:92px;height:17px"></div>
<svg class="a" style="left:160px;top:453px" width="12" height="14">
 <path d="M2 2 H8 L10 4 V12 H2Z" fill="#eef4ff" stroke="#4070b0" stroke-width="0.8"/>
 <path d="M1 4 L5 2 L8 9 L3 11Z" fill="#3a86d8"/>
</svg>
<div class="t" style="left:173px;top:458.3px;font-size:6.6px;color:#222">blueprinttutorial - Not...</div>
<div class="tb" style="left:252px;top:452px;width:90px;height:17px"></div>
<svg class="a" style="left:255px;top:453px" width="13" height="13">
 <circle cx="6.5" cy="6.5" r="4" fill="none" stroke="#2a6fd0" stroke-width="2"/>
 <path d="M3 6.5 H10" stroke="#2a6fd0" stroke-width="1.2"/>
 <path d="M1 10 C3 4 8 1 12 1.5" fill="none" stroke="#e0a020" stroke-width="1"/>
</svg>
<div class="t" style="left:269px;top:458.3px;font-size:6.6px;color:#222">Onno van Braam - Tu...</div>
<div class="tb" style="left:344px;top:452px;width:93px;height:17px"></div>
<svg class="a" style="left:347px;top:454px" width="13" height="12">
 <path d="M1 3 H5 L6 4 H11 V10 H1Z" fill="#f4d36a" stroke="#c0962a" stroke-width="0.7"/>
</svg>
<div class="t" style="left:361px;top:458.3px;font-size:6.6px;color:#222">Pictures</div>
<div class="tb" style="left:438px;top:452px;width:92px;height:17px"></div>
<svg class="a" style="left:441px;top:453px" width="13" height="13">
 <path d="M3 11 C3 6 6 2 10 1 C8 4 7 8 8 11Z" fill="#3a78d0" stroke="#1a3a80" stroke-width="0.6"/>
 <path d="M4 9 L9 3" stroke="#fff" stroke-width="0.8"/>
</svg>
<div class="t" style="left:456px;top:458.3px;font-size:6.6px;color:#222">Adobe Photoshop</div>
<!-- tray -->
<div class="a" style="left:674px;top:451px;width:76px;height:18px;background:linear-gradient(#e8e8f4,#fafafc 2px,#f2f2f6 9px,#e6e6ee 18px);border-left:1px solid #b0b0c4"></div>
<svg class="a" style="left:668px;top:451px" width="82" height="18">
 <circle cx="6.2" cy="9" r="4.8" fill="#b4b4c8" stroke="#8a8aa4" stroke-width="0.8"/>
 <circle cx="6.2" cy="8.6" r="3.6" fill="#dcdce8"/>
 <path d="M7.2 6.3 L5 8.8 L7.2 11.3" fill="none" stroke="#fff" stroke-width="1.4"/>
 <rect x="13.5" y="4" width="8" height="10" fill="#fffef0" stroke="#e8d890" stroke-width="0.6"/>
 <path d="M14.5 5.5 L16.3 11 L18.1 5.5" fill="none" stroke="#e0b020" stroke-width="1.3"/>
 <path d="M18.8 9.5 H20.5 L19.3 11 Q20.8 11.3 19.8 12.8 H18.6" fill="none" stroke="#e0b020" stroke-width="0.8"/>
 <rect x="24.2" y="4.2" width="8" height="7" fill="#1a9c1a" stroke="#1a3a1a" stroke-width="0.8"/>
 <path d="M24.5 13.5 H27 M29.5 13.5 H32" stroke="#222" stroke-width="1.4"/>
 <rect x="34.2" y="4.5" width="8.8" height="9.5" rx="1" fill="#7a1aa0"/>
 <circle cx="38.6" cy="9.2" r="2.4" fill="#f4eef8"/>
 <circle cx="38.6" cy="9.2" r="0.9" fill="#9a4ab8"/>
</svg>
<div class="t" style="left:717px;top:458px;font-size:6.8px;color:#111">1:29 PM</div>

</body></html>
